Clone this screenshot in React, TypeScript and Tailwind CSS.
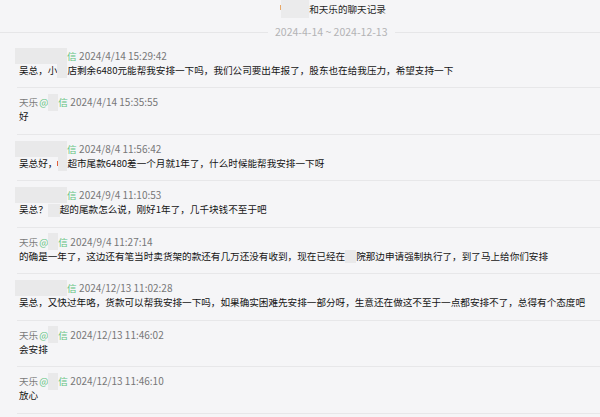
import React from "react";

type Msg = {
  self: boolean;
  time: string;
  content: React.ReactNode;
};

const Blur = ({ w, h = 14, cls = "" }: { w: number; h?: number; cls?: string }) => (
  <span
    className={"inline-block bg-[#e9e9ea] align-middle " + cls}
    style={{ width: w, height: h }}
  />
);

const msgs: Msg[] = [
  {
    self: false,
    time: "2024/4/14 15:29:42",
    content: (
      <>
        吴总，小<Blur w={10} h={15} cls="-mt-[1px]" />店剩余6480元能帮我安排一下吗，我们公司要出年报了，股东也在给我压力，希望支持一下
      </>
    ),
  },
  { self: true, time: "2024/4/14 15:35:55", content: <>好</> },
  {
    self: false,
    time: "2024/8/4 11:56:42",
    content: (
      <>
        吴总好，<span className="inline-block w-[1px] h-[5px] bg-[#e0603c] align-middle" />
        <Blur w={9} h={15} cls="-mt-[1px]" />超市尾款6480差一个月就1年了，什么时候能帮我安排一下呀
      </>
    ),
  },
  {
    self: false,
    time: "2024/9/4 11:10:53",
    content: (
      <>
        吴总？<Blur w={12} h={13} />超的尾款怎么说，刚好1年了，几千块钱不至于吧
      </>
    ),
  },
  {
    self: true,
    time: "2024/9/4 11:27:14",
    content: (
      <>
        的确是一年了，这边还有笔当时卖货架的款还有几万还没有收到，现在已经在<Blur w={11} h={13} />院那边申请强制执行了，到了马上给你们安排
      </>
    ),
  },
  {
    self: false,
    time: "2024/12/13 11:02:28",
    content: (
      <>
        吴总，又快过年咯，货款可以帮我安排一下吗，如果确实困难先安排一部分呀，生意还在做这不至于一点都安排不了，总得有个态度吧
      </>
    ),
  },
  { self: true, time: "2024/12/13 11:46:02", content: <>会安排</> },
  { self: true, time: "2024/12/13 11:46:10", content: <>放心</> },
];

export default function App() {
  return (
    <div className="w-[600px] h-[417px] overflow-hidden bg-[#f5f5f7] font-['Noto_Sans_CJK_SC',sans-serif] text-[9.6px] leading-[14px] text-[#141414]">
      {/* title */}
      <div className="h-[18px] flex items-center justify-center pl-[66px]">
        <span className="inline-block w-[1px] h-[5px] bg-[#e8a868] mt-[-3px]" />
        <span className="inline-block w-[28px] h-[18px] bg-[#ebebec]" />
        <span className="text-[#1e1e1e] whitespace-nowrap">和天乐的聊天记录</span>
      </div>
      {/* date range */}
      <div className="mt-[7px] h-[14px] flex items-center">
        <div className="w-[268px] h-[1px] bg-[#e6e6e8]" />
        <span className="px-[7px] text-[#b3b3b5] whitespace-nowrap text-[10.5px]">2024-4-14 ~ 2024-12-13</span>
        <div className="flex-1 h-[1px] bg-[#e6e6e8]" />
      </div>
      {/* messages */}
      <div className="mt-[2.5px] ml-[17px]">
        {msgs.map((m, i) => (
          <div key={i} className="border-b border-[#e7e7e9] pt-[7px] pb-[10.5px] pl-[2px]">
            <div className="h-[14px] flex items-center whitespace-nowrap">
              {m.self ? (
                <>
                  <span className="text-[#7a7a7a]">天乐</span>
                  <span className="text-[#5cc27c] ml-[1px]">@</span>
                  <span className="inline-block w-[10px] h-[17px] bg-[#e9e9ea] -my-[2px]" />
                  <span className="text-[#5cc27c]">信</span>
                </>
              ) : (
                <>
                  <span className="inline-block w-[52px] h-[16px] bg-[#e9e9ea] -ml-[4px] -my-[1px]" />
                  <span className="text-[#5cc27c]">信</span>
                </>
              )}
              <span className="text-[#777777] ml-[2.5px] text-[10px]">{m.time}</span>
            </div>
            <div className="h-[14px] whitespace-nowrap">{m.content}</div>
          </div>
        ))}
      </div>
    </div>
  );
}
